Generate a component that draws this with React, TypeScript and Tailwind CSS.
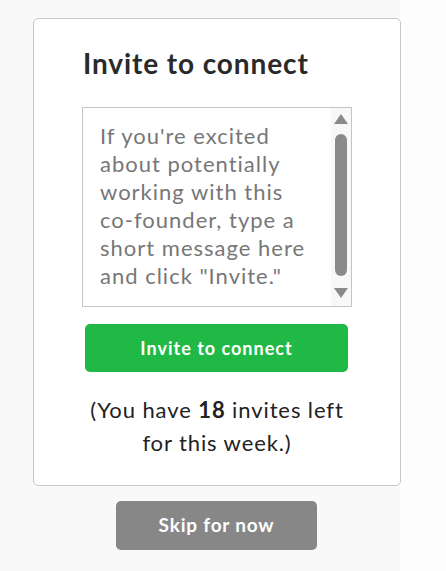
import React from "react";

export default function App() {
  return (
    <div
      className="flex w-[446px] h-[571px] bg-[#fdfdfd]"
      style={{ fontFamily: "Lato, 'Open Sans', sans-serif" }}
    >
      <div className="w-[400px] h-full bg-[#f9f9f9] flex flex-col items-start">
        <div className="ml-[33px] mt-[18px] w-[368px] h-[468px] bg-white border border-[#c8c8c8] rounded-[5px] flex flex-col">
          <h1 className="ml-[49px] mt-[26px] text-[28px] leading-[36px] font-bold tracking-[0.9px] text-[#2a2a2a]">
            Invite to connect
          </h1>
          <div className="ml-[48px] mt-[26px] w-[270px] h-[200px] border border-[#c4c4c4] flex">
            <div className="flex-1 pl-[17px] pr-[16px] pt-[14px] text-[22px] leading-[28px] tracking-[1px] text-[#777777]">
              If you're excited about potentially working with this co‑founder, type a short message here and click "Invite."
            </div>
            <div className="w-[20px] h-full bg-[#f8f8f8] flex flex-col items-center">
              <svg width="14" height="10" viewBox="0 0 14 10" className="mt-[6px]">
                <polygon points="7,0 14,10 0,10" fill="#8a8a8a" />
              </svg>
              <div className="mt-[10px] w-[12px] h-[142px] rounded-full bg-[#8a8a8a]" />
              <svg width="14" height="10" viewBox="0 0 14 10" className="mt-[12px]">
                <polygon points="0,0 14,0 7,10" fill="#8a8a8a" />
              </svg>
            </div>
          </div>
          <button className="ml-[51px] mt-[17px] w-[263px] h-[48px] rounded-[5px] bg-[#21b945] text-white text-[18px] font-bold tracking-[1px]">
            Invite to connect
          </button>
          <p className="mt-[21px] text-center text-[22px] leading-[33px] tracking-[0.9px] text-[#222222]">
            (You have <span className="font-bold">18</span> invites left
            <br />
            for this week.)
          </p>
        </div>
        <button className="ml-[116px] mt-[15px] w-[201px] h-[49px] rounded-[5px] bg-[#878787] text-white text-[19px] font-bold tracking-[0.8px]">
          Skip for now
        </button>
      </div>
    </div>
  );
}
